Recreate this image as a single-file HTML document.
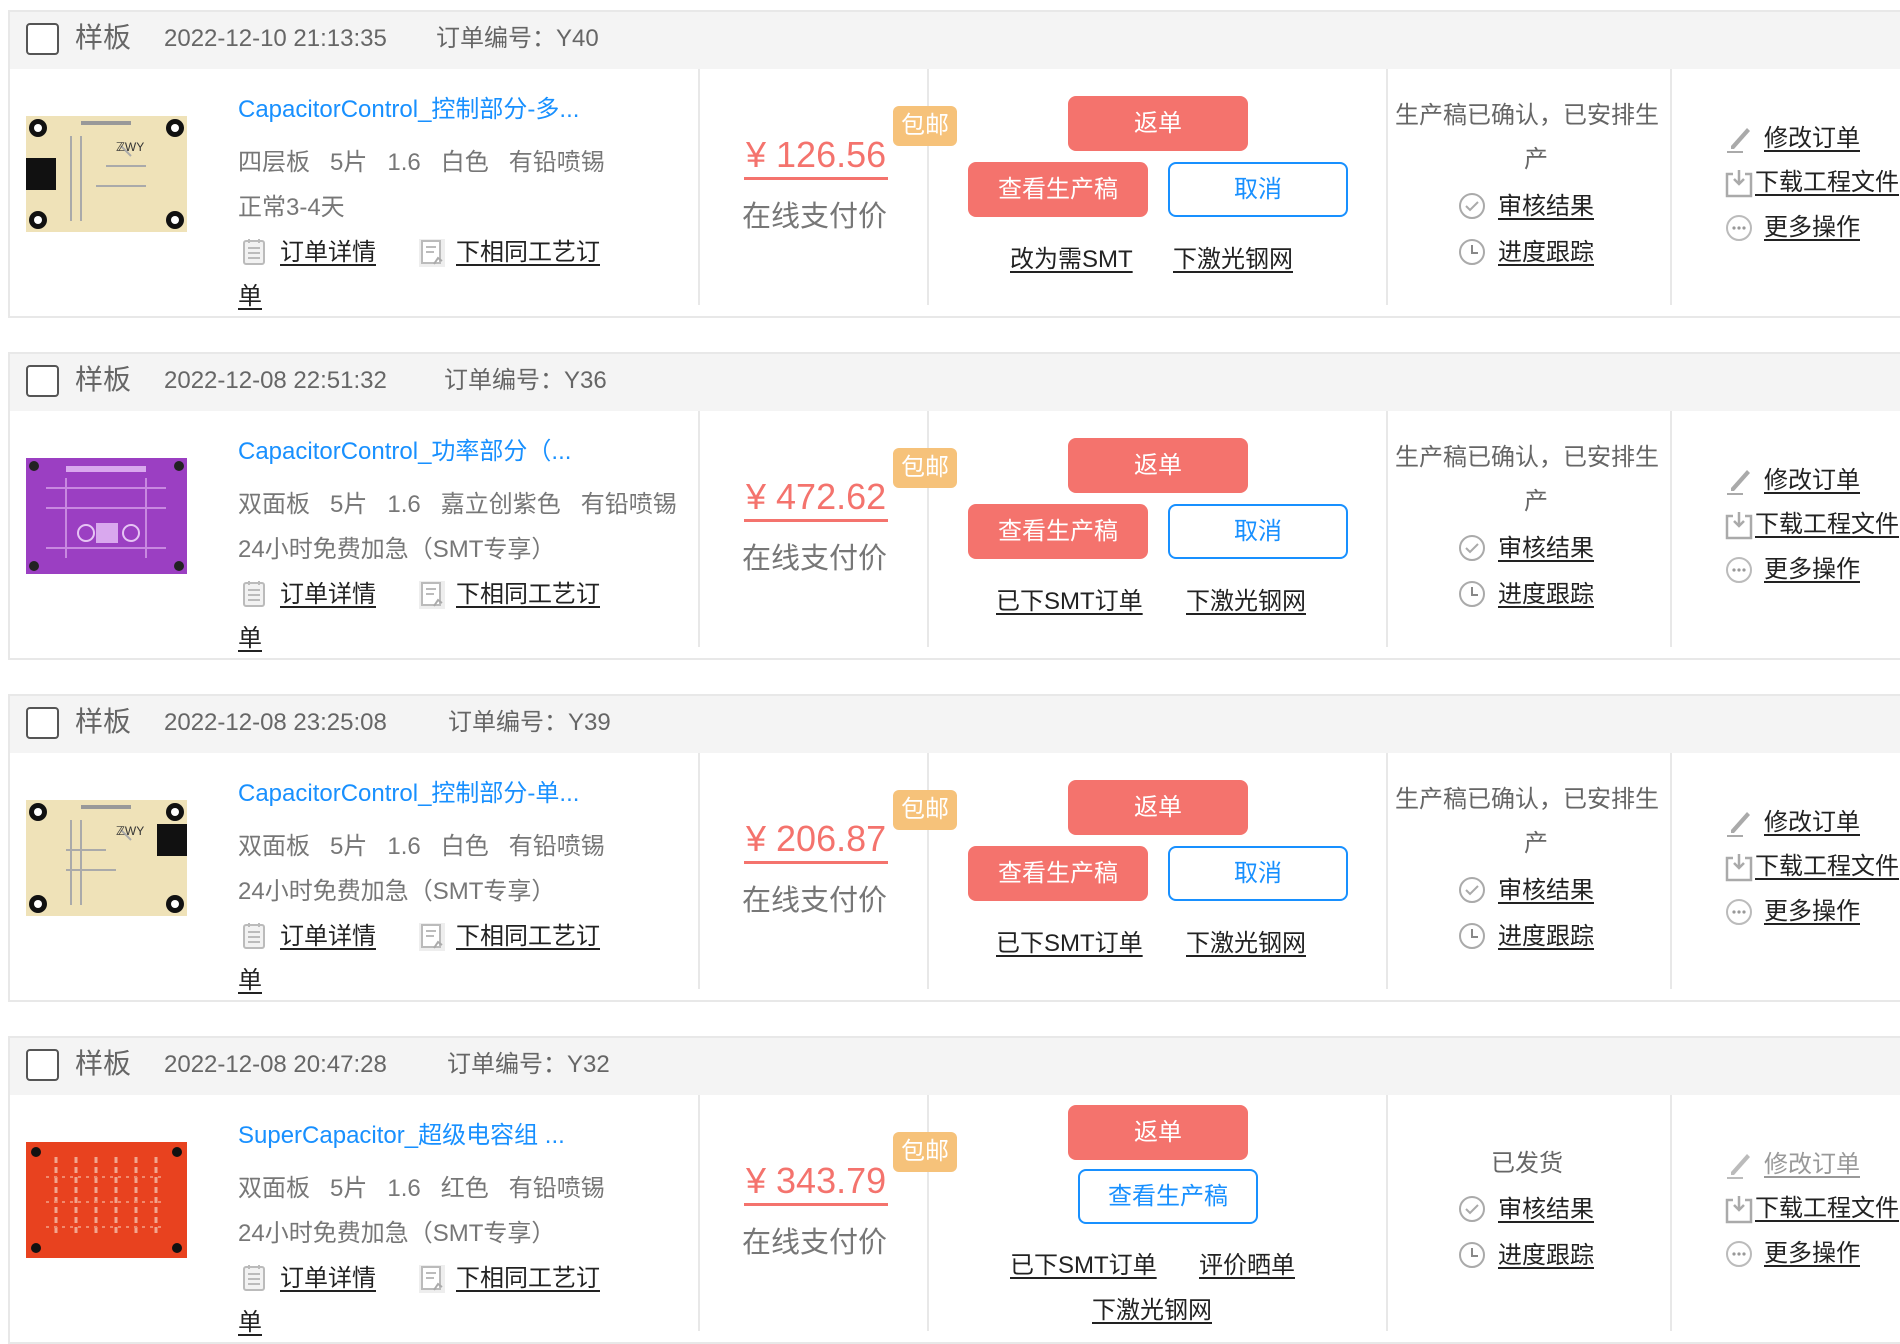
<!DOCTYPE html>
<html><head><meta charset="utf-8">
<style>
*{margin:0;padding:0;box-sizing:border-box}
body{width:1900px;height:1334px;overflow:hidden;background:#fff;font-family:"Liberation Sans","Noto Sans CJK SC",sans-serif;position:relative}
.card{position:absolute;left:8px;width:1900px;height:308px;border:2px solid #e8e8e8;border-right:none}
.hd{position:absolute;left:0;top:0;width:100%;height:57px;background:#f4f4f4}
.cb{position:absolute;left:16px;top:11px;width:33px;height:32px;border:2px solid #555;border-radius:4px;background:#fff}
.ht{position:absolute;top:12px;font-size:24px;line-height:30px;color:#666;white-space:nowrap}
.yb{font-size:28px;color:#666}
.vl{position:absolute;top:57px;width:2px;height:236px;background:#e8e8e8}
.pic{position:absolute;left:16px;top:104px;width:161px;height:116px}
.a{position:absolute;white-space:nowrap;font-size:24px;line-height:30px}
.title{color:#1890ff}
.spec{color:#777}
.lk{color:#222;text-decoration:underline;text-underline-offset:4px}
.price{color:#f4736d;font-size:36px;line-height:44px;border-bottom:3px solid #f4736d;padding:0 2px}
.by{position:absolute;left:883px;top:94px;width:64px;height:40px;background:#f6c27a;color:#fff;font-size:24px;line-height:40px;text-align:center;border-radius:6px}
.btn{position:absolute;width:180px;height:55px;border-radius:8px;font-size:24px;line-height:55px;text-align:center}
.red{background:#f4736d;color:#fff}
.blu{border:2px solid #1890ff;color:#1890ff;line-height:51px;background:#fff}
.st{color:#666}
.ic{position:absolute}
</style></head><body>

<!-- reusable svgs inline -->

<!-- CARD 1 -->
<div class="card" style="top:10px">
<div class="hd"><div class="cb"></div>
<div class="ht yb" style="left:65px;top:11px">样板</div>
<div class="ht" style="left:154px">2022-12-10 21:13:35</div>
<div class="ht" style="left:426px">订单编号：Y40</div></div>
<div class="vl" style="left:688px"></div><div class="vl" style="left:917px"></div><div class="vl" style="left:1376px"></div><div class="vl" style="left:1660px"></div>
<svg class="pic" viewBox="0 0 161 116"><rect width="161" height="116" fill="#efe2b8"/><circle cx="12" cy="12" r="9" fill="#111"/><circle cx="12" cy="12" r="4" fill="#fff"/><circle cx="149" cy="12" r="9" fill="#111"/><circle cx="149" cy="12" r="4" fill="#fff"/><circle cx="12" cy="104" r="9" fill="#111"/><circle cx="12" cy="104" r="4" fill="#fff"/><circle cx="149" cy="104" r="9" fill="#111"/><circle cx="149" cy="104" r="4" fill="#fff"/><rect x="0" y="42" width="30" height="32" fill="#111"/><rect x="55" y="5" width="50" height="4" fill="#999"/><path d="M45 20v85M55 20v85M80 50h40M70 70h50M95 30l10 10" stroke="#aaa" stroke-width="2"/><text x="90" y="35" font-size="12" fill="#333">ℤWY</text></svg>
<div class="a title" style="left:228px;top:83px">CapacitorControl_控制部分-多...</div>
<div class="a spec" style="left:228px;top:136px">四层板 &nbsp; 5片 &nbsp; 1.6 &nbsp; 白色 &nbsp; 有铅喷锡</div>
<div class="a spec" style="left:228px;top:181px">正常3-4天</div>
<svg class="ic" style="left:232px;top:226px" width="24" height="28" viewBox="0 0 24 28"><rect x="2" y="3" width="20" height="23" rx="2" fill="#f2f2f2" stroke="#bbb" stroke-width="2"/><path d="M6 10h12M6 15h12M6 20h12M7 1v4M17 1v4" stroke="#bbb" stroke-width="2"/></svg>
<div class="a lk" style="left:270px;top:226px">订单详情</div>
<svg class="ic" style="left:408px;top:226px" width="28" height="30" viewBox="0 0 28 30"><rect x="1" y="1" width="26" height="28" fill="#eee"/><rect x="4" y="3" width="18" height="22" fill="#fff" stroke="#bbb" stroke-width="2"/><path d="M8 9h10M8 14h8" stroke="#bbb" stroke-width="2"/><path d="M16 26l4-6 4 3" stroke="#aaa" stroke-width="2" fill="none"/></svg>
<div class="a lk" style="left:446px;top:226px">下相同工艺订</div>
<div class="a lk" style="left:228px;top:270px">单</div>
<div class="a price" style="left:734px;top:121px">¥ 126.56</div>
<div class="by">包邮</div>
<div class="a spec" style="left:732px;top:188px;font-size:29px;line-height:34px">在线支付价</div>
<div class="btn red" style="left:1058px;top:84px">返单</div>
<div class="btn red" style="left:958px;top:150px">查看生产稿</div>
<div class="btn blu" style="left:1158px;top:150px">取消</div>
<div class="a lk" style="left:1000px;top:233px">改为需SMT</div>
<div class="a lk" style="left:1163px;top:233px">下激光钢网</div>
<div class="a st" style="left:1385px;top:89px">生产稿已确认，已安排生</div>
<div class="a st" style="left:1514px;top:133px">产</div>
<svg class="ic" style="left:1448px;top:180px" width="28" height="28" viewBox="0 0 28 28"><circle cx="14" cy="14" r="12" fill="none" stroke="#aaa" stroke-width="2"/><path d="M8 14l4 4 8-8" stroke="#aaa" stroke-width="2" fill="none"/></svg>
<div class="a lk" style="left:1488px;top:180px">审核结果</div>
<svg class="ic" style="left:1448px;top:226px" width="28" height="28" viewBox="0 0 28 28"><circle cx="14" cy="14" r="12" fill="none" stroke="#aaa" stroke-width="2"/><path d="M14 7v8h6" stroke="#888" stroke-width="2" fill="none"/></svg>
<div class="a lk" style="left:1488px;top:226px">进度跟踪</div>
<svg class="ic" style="left:1715px;top:112px" width="28" height="30" viewBox="0 0 28 30"><path d="M6 22L22 4l3 3L9 25H6z" fill="#aaa"/><path d="M2 28h16" stroke="#aaa" stroke-width="2"/></svg>
<div class="a lk" style="left:1754px;top:112px">修改订单</div>
<svg class="ic" style="left:1715px;top:156px" width="28" height="30" viewBox="0 0 28 30"><path d="M8 6H2v22h24V6h-6" stroke="#aaa" stroke-width="2.5" fill="none"/><path d="M14 2v14M9 11l5 5 5-5" stroke="#aaa" stroke-width="2.5" fill="none"/></svg>
<div class="a lk" style="left:1745px;top:156px">下载工程文件</div>
<svg class="ic" style="left:1715px;top:202px" width="28" height="28" viewBox="0 0 28 28"><circle cx="14" cy="14" r="12" fill="none" stroke="#bbb" stroke-width="2"/><circle cx="9" cy="14" r="1.6" fill="#999"/><circle cx="14" cy="14" r="1.6" fill="#999"/><circle cx="19" cy="14" r="1.6" fill="#999"/></svg>
<div class="a lk" style="left:1754px;top:201px">更多操作</div>
</div>

<!-- CARD 2 -->
<div class="card" style="top:352px">
<div class="hd"><div class="cb"></div>
<div class="ht yb" style="left:65px;top:11px">样板</div>
<div class="ht" style="left:154px">2022-12-08 22:51:32</div>
<div class="ht" style="left:434px">订单编号：Y36</div></div>
<div class="vl" style="left:688px"></div><div class="vl" style="left:917px"></div><div class="vl" style="left:1376px"></div><div class="vl" style="left:1660px"></div>
<svg class="pic" viewBox="0 0 161 116"><rect width="161" height="116" fill="#9b3fc2"/><circle cx="8" cy="8" r="5" fill="#222"/><circle cx="153" cy="8" r="5" fill="#222"/><circle cx="8" cy="108" r="5" fill="#222"/><circle cx="153" cy="108" r="5" fill="#222"/><rect x="40" y="8" width="80" height="6" fill="#d9a8ee"/><rect x="70" y="65" width="22" height="20" fill="#d9a8ee"/><path d="M20 30h120M20 50h120M20 90h120M40 20v80M120 20v80" stroke="#c888e0" stroke-width="2"/><circle cx="60" cy="75" r="8" fill="none" stroke="#e6c4f4" stroke-width="2"/><circle cx="105" cy="75" r="8" fill="none" stroke="#e6c4f4" stroke-width="2"/></svg>
<div class="a title" style="left:228px;top:83px">CapacitorControl_功率部分（...</div>
<div class="a spec" style="left:228px;top:136px">双面板 &nbsp; 5片 &nbsp; 1.6 &nbsp; 嘉立创紫色 &nbsp; 有铅喷锡</div>
<div class="a spec" style="left:228px;top:181px">24小时免费加急（SMT专享）</div>
<svg class="ic" style="left:232px;top:226px" width="24" height="28" viewBox="0 0 24 28"><rect x="2" y="3" width="20" height="23" rx="2" fill="#f2f2f2" stroke="#bbb" stroke-width="2"/><path d="M6 10h12M6 15h12M6 20h12M7 1v4M17 1v4" stroke="#bbb" stroke-width="2"/></svg>
<div class="a lk" style="left:270px;top:226px">订单详情</div>
<svg class="ic" style="left:408px;top:226px" width="28" height="30" viewBox="0 0 28 30"><rect x="1" y="1" width="26" height="28" fill="#eee"/><rect x="4" y="3" width="18" height="22" fill="#fff" stroke="#bbb" stroke-width="2"/><path d="M8 9h10M8 14h8" stroke="#bbb" stroke-width="2"/><path d="M16 26l4-6 4 3" stroke="#aaa" stroke-width="2" fill="none"/></svg>
<div class="a lk" style="left:446px;top:226px">下相同工艺订</div>
<div class="a lk" style="left:228px;top:270px">单</div>
<div class="a price" style="left:734px;top:121px">¥ 472.62</div>
<div class="by">包邮</div>
<div class="a spec" style="left:732px;top:188px;font-size:29px;line-height:34px">在线支付价</div>
<div class="btn red" style="left:1058px;top:84px">返单</div>
<div class="btn red" style="left:958px;top:150px">查看生产稿</div>
<div class="btn blu" style="left:1158px;top:150px">取消</div>
<div class="a lk" style="left:986px;top:233px">已下SMT订单</div>
<div class="a lk" style="left:1176px;top:233px">下激光钢网</div>
<div class="a st" style="left:1385px;top:89px">生产稿已确认，已安排生</div>
<div class="a st" style="left:1514px;top:133px">产</div>
<svg class="ic" style="left:1448px;top:180px" width="28" height="28" viewBox="0 0 28 28"><circle cx="14" cy="14" r="12" fill="none" stroke="#aaa" stroke-width="2"/><path d="M8 14l4 4 8-8" stroke="#aaa" stroke-width="2" fill="none"/></svg>
<div class="a lk" style="left:1488px;top:180px">审核结果</div>
<svg class="ic" style="left:1448px;top:226px" width="28" height="28" viewBox="0 0 28 28"><circle cx="14" cy="14" r="12" fill="none" stroke="#aaa" stroke-width="2"/><path d="M14 7v8h6" stroke="#888" stroke-width="2" fill="none"/></svg>
<div class="a lk" style="left:1488px;top:226px">进度跟踪</div>
<svg class="ic" style="left:1715px;top:112px" width="28" height="30" viewBox="0 0 28 30"><path d="M6 22L22 4l3 3L9 25H6z" fill="#aaa"/><path d="M2 28h16" stroke="#aaa" stroke-width="2"/></svg>
<div class="a lk" style="left:1754px;top:112px">修改订单</div>
<svg class="ic" style="left:1715px;top:156px" width="28" height="30" viewBox="0 0 28 30"><path d="M8 6H2v22h24V6h-6" stroke="#aaa" stroke-width="2.5" fill="none"/><path d="M14 2v14M9 11l5 5 5-5" stroke="#aaa" stroke-width="2.5" fill="none"/></svg>
<div class="a lk" style="left:1745px;top:156px">下载工程文件</div>
<svg class="ic" style="left:1715px;top:202px" width="28" height="28" viewBox="0 0 28 28"><circle cx="14" cy="14" r="12" fill="none" stroke="#bbb" stroke-width="2"/><circle cx="9" cy="14" r="1.6" fill="#999"/><circle cx="14" cy="14" r="1.6" fill="#999"/><circle cx="19" cy="14" r="1.6" fill="#999"/></svg>
<div class="a lk" style="left:1754px;top:201px">更多操作</div>
</div>

<!-- CARD 3 -->
<div class="card" style="top:694px">
<div class="hd"><div class="cb"></div>
<div class="ht yb" style="left:65px;top:11px">样板</div>
<div class="ht" style="left:154px">2022-12-08 23:25:08</div>
<div class="ht" style="left:438px">订单编号：Y39</div></div>
<div class="vl" style="left:688px"></div><div class="vl" style="left:917px"></div><div class="vl" style="left:1376px"></div><div class="vl" style="left:1660px"></div>
<svg class="pic" viewBox="0 0 161 116"><rect width="161" height="116" fill="#efe2b8"/><circle cx="12" cy="12" r="9" fill="#111"/><circle cx="12" cy="12" r="4" fill="#fff"/><circle cx="149" cy="12" r="9" fill="#111"/><circle cx="149" cy="12" r="4" fill="#fff"/><circle cx="12" cy="104" r="9" fill="#111"/><circle cx="12" cy="104" r="4" fill="#fff"/><circle cx="149" cy="104" r="9" fill="#111"/><circle cx="149" cy="104" r="4" fill="#fff"/><rect x="131" y="24" width="30" height="32" fill="#111"/><rect x="55" y="5" width="50" height="4" fill="#999"/><path d="M45 20v85M55 20v85M40 50h40M40 70h50M95 30l10 10" stroke="#aaa" stroke-width="2"/><text x="90" y="35" font-size="12" fill="#333">ℤWY</text></svg>
<div class="a title" style="left:228px;top:83px">CapacitorControl_控制部分-单...</div>
<div class="a spec" style="left:228px;top:136px">双面板 &nbsp; 5片 &nbsp; 1.6 &nbsp; 白色 &nbsp; 有铅喷锡</div>
<div class="a spec" style="left:228px;top:181px">24小时免费加急（SMT专享）</div>
<svg class="ic" style="left:232px;top:226px" width="24" height="28" viewBox="0 0 24 28"><rect x="2" y="3" width="20" height="23" rx="2" fill="#f2f2f2" stroke="#bbb" stroke-width="2"/><path d="M6 10h12M6 15h12M6 20h12M7 1v4M17 1v4" stroke="#bbb" stroke-width="2"/></svg>
<div class="a lk" style="left:270px;top:226px">订单详情</div>
<svg class="ic" style="left:408px;top:226px" width="28" height="30" viewBox="0 0 28 30"><rect x="1" y="1" width="26" height="28" fill="#eee"/><rect x="4" y="3" width="18" height="22" fill="#fff" stroke="#bbb" stroke-width="2"/><path d="M8 9h10M8 14h8" stroke="#bbb" stroke-width="2"/><path d="M16 26l4-6 4 3" stroke="#aaa" stroke-width="2" fill="none"/></svg>
<div class="a lk" style="left:446px;top:226px">下相同工艺订</div>
<div class="a lk" style="left:228px;top:270px">单</div>
<div class="a price" style="left:734px;top:121px">¥ 206.87</div>
<div class="by">包邮</div>
<div class="a spec" style="left:732px;top:188px;font-size:29px;line-height:34px">在线支付价</div>
<div class="btn red" style="left:1058px;top:84px">返单</div>
<div class="btn red" style="left:958px;top:150px">查看生产稿</div>
<div class="btn blu" style="left:1158px;top:150px">取消</div>
<div class="a lk" style="left:986px;top:233px">已下SMT订单</div>
<div class="a lk" style="left:1176px;top:233px">下激光钢网</div>
<div class="a st" style="left:1385px;top:89px">生产稿已确认，已安排生</div>
<div class="a st" style="left:1514px;top:133px">产</div>
<svg class="ic" style="left:1448px;top:180px" width="28" height="28" viewBox="0 0 28 28"><circle cx="14" cy="14" r="12" fill="none" stroke="#aaa" stroke-width="2"/><path d="M8 14l4 4 8-8" stroke="#aaa" stroke-width="2" fill="none"/></svg>
<div class="a lk" style="left:1488px;top:180px">审核结果</div>
<svg class="ic" style="left:1448px;top:226px" width="28" height="28" viewBox="0 0 28 28"><circle cx="14" cy="14" r="12" fill="none" stroke="#aaa" stroke-width="2"/><path d="M14 7v8h6" stroke="#888" stroke-width="2" fill="none"/></svg>
<div class="a lk" style="left:1488px;top:226px">进度跟踪</div>
<svg class="ic" style="left:1715px;top:112px" width="28" height="30" viewBox="0 0 28 30"><path d="M6 22L22 4l3 3L9 25H6z" fill="#aaa"/><path d="M2 28h16" stroke="#aaa" stroke-width="2"/></svg>
<div class="a lk" style="left:1754px;top:112px">修改订单</div>
<svg class="ic" style="left:1715px;top:156px" width="28" height="30" viewBox="0 0 28 30"><path d="M8 6H2v22h24V6h-6" stroke="#aaa" stroke-width="2.5" fill="none"/><path d="M14 2v14M9 11l5 5 5-5" stroke="#aaa" stroke-width="2.5" fill="none"/></svg>
<div class="a lk" style="left:1745px;top:156px">下载工程文件</div>
<svg class="ic" style="left:1715px;top:202px" width="28" height="28" viewBox="0 0 28 28"><circle cx="14" cy="14" r="12" fill="none" stroke="#bbb" stroke-width="2"/><circle cx="9" cy="14" r="1.6" fill="#999"/><circle cx="14" cy="14" r="1.6" fill="#999"/><circle cx="19" cy="14" r="1.6" fill="#999"/></svg>
<div class="a lk" style="left:1754px;top:201px">更多操作</div>
</div>

<!-- CARD 4 -->
<div class="card" style="top:1036px">
<div class="hd"><div class="cb"></div>
<div class="ht yb" style="left:65px;top:11px">样板</div>
<div class="ht" style="left:154px">2022-12-08 20:47:28</div>
<div class="ht" style="left:437px">订单编号：Y32</div></div>
<div class="vl" style="left:688px"></div><div class="vl" style="left:917px"></div><div class="vl" style="left:1376px"></div><div class="vl" style="left:1660px"></div>
<svg class="pic" viewBox="0 0 161 116"><rect width="161" height="116" fill="#e8421f"/><circle cx="10" cy="10" r="5" fill="#111"/><circle cx="151" cy="10" r="5" fill="#111"/><circle cx="10" cy="106" r="5" fill="#111"/><circle cx="151" cy="106" r="5" fill="#111"/><path d="M30 15v80M50 15v80M70 15v80M90 15v80M110 15v80M130 15v80" stroke="#f2a58e" stroke-width="3" stroke-dasharray="6 4"/><path d="M20 35h120M20 60h120M20 85h120" stroke="#f08a6e" stroke-width="2" stroke-dasharray="3 5"/></svg>
<div class="a title" style="left:228px;top:83px">SuperCapacitor_超级电容组 ...</div>
<div class="a spec" style="left:228px;top:136px">双面板 &nbsp; 5片 &nbsp; 1.6 &nbsp; 红色 &nbsp; 有铅喷锡</div>
<div class="a spec" style="left:228px;top:181px">24小时免费加急（SMT专享）</div>
<svg class="ic" style="left:232px;top:226px" width="24" height="28" viewBox="0 0 24 28"><rect x="2" y="3" width="20" height="23" rx="2" fill="#f2f2f2" stroke="#bbb" stroke-width="2"/><path d="M6 10h12M6 15h12M6 20h12M7 1v4M17 1v4" stroke="#bbb" stroke-width="2"/></svg>
<div class="a lk" style="left:270px;top:226px">订单详情</div>
<svg class="ic" style="left:408px;top:226px" width="28" height="30" viewBox="0 0 28 30"><rect x="1" y="1" width="26" height="28" fill="#eee"/><rect x="4" y="3" width="18" height="22" fill="#fff" stroke="#bbb" stroke-width="2"/><path d="M8 9h10M8 14h8" stroke="#bbb" stroke-width="2"/><path d="M16 26l4-6 4 3" stroke="#aaa" stroke-width="2" fill="none"/></svg>
<div class="a lk" style="left:446px;top:226px">下相同工艺订</div>
<div class="a lk" style="left:228px;top:270px">单</div>
<div class="a price" style="left:734px;top:121px">¥ 343.79</div>
<div class="by">包邮</div>
<div class="a spec" style="left:732px;top:188px;font-size:29px;line-height:34px">在线支付价</div>
<div class="btn red" style="left:1058px;top:67px">返单</div>
<div class="btn blu" style="left:1068px;top:131px">查看生产稿</div>
<div class="a lk" style="left:1000px;top:213px">已下SMT订单</div>
<div class="a lk" style="left:1189px;top:213px">评价晒单</div>
<div class="a lk" style="left:1082px;top:258px">下激光钢网</div>
<div class="a st" style="left:1481px;top:111px">已发货</div>
<svg class="ic" style="left:1448px;top:157px" width="28" height="28" viewBox="0 0 28 28"><circle cx="14" cy="14" r="12" fill="none" stroke="#aaa" stroke-width="2"/><path d="M8 14l4 4 8-8" stroke="#aaa" stroke-width="2" fill="none"/></svg>
<div class="a lk" style="left:1488px;top:157px">审核结果</div>
<svg class="ic" style="left:1448px;top:203px" width="28" height="28" viewBox="0 0 28 28"><circle cx="14" cy="14" r="12" fill="none" stroke="#aaa" stroke-width="2"/><path d="M14 7v8h6" stroke="#888" stroke-width="2" fill="none"/></svg>
<div class="a lk" style="left:1488px;top:203px">进度跟踪</div>
<svg class="ic" style="left:1715px;top:112px" width="28" height="30" viewBox="0 0 28 30"><path d="M6 22L22 4l3 3L9 25H6z" fill="#bbb"/><path d="M2 28h16" stroke="#bbb" stroke-width="2"/></svg>
<div class="a lk" style="left:1754px;top:112px;color:#999">修改订单</div>
<svg class="ic" style="left:1715px;top:156px" width="28" height="30" viewBox="0 0 28 30"><path d="M8 6H2v22h24V6h-6" stroke="#aaa" stroke-width="2.5" fill="none"/><path d="M14 2v14M9 11l5 5 5-5" stroke="#aaa" stroke-width="2.5" fill="none"/></svg>
<div class="a lk" style="left:1745px;top:156px">下载工程文件</div>
<svg class="ic" style="left:1715px;top:202px" width="28" height="28" viewBox="0 0 28 28"><circle cx="14" cy="14" r="12" fill="none" stroke="#bbb" stroke-width="2"/><circle cx="9" cy="14" r="1.6" fill="#999"/><circle cx="14" cy="14" r="1.6" fill="#999"/><circle cx="19" cy="14" r="1.6" fill="#999"/></svg>
<div class="a lk" style="left:1754px;top:201px">更多操作</div>
</div>

</body></html>
